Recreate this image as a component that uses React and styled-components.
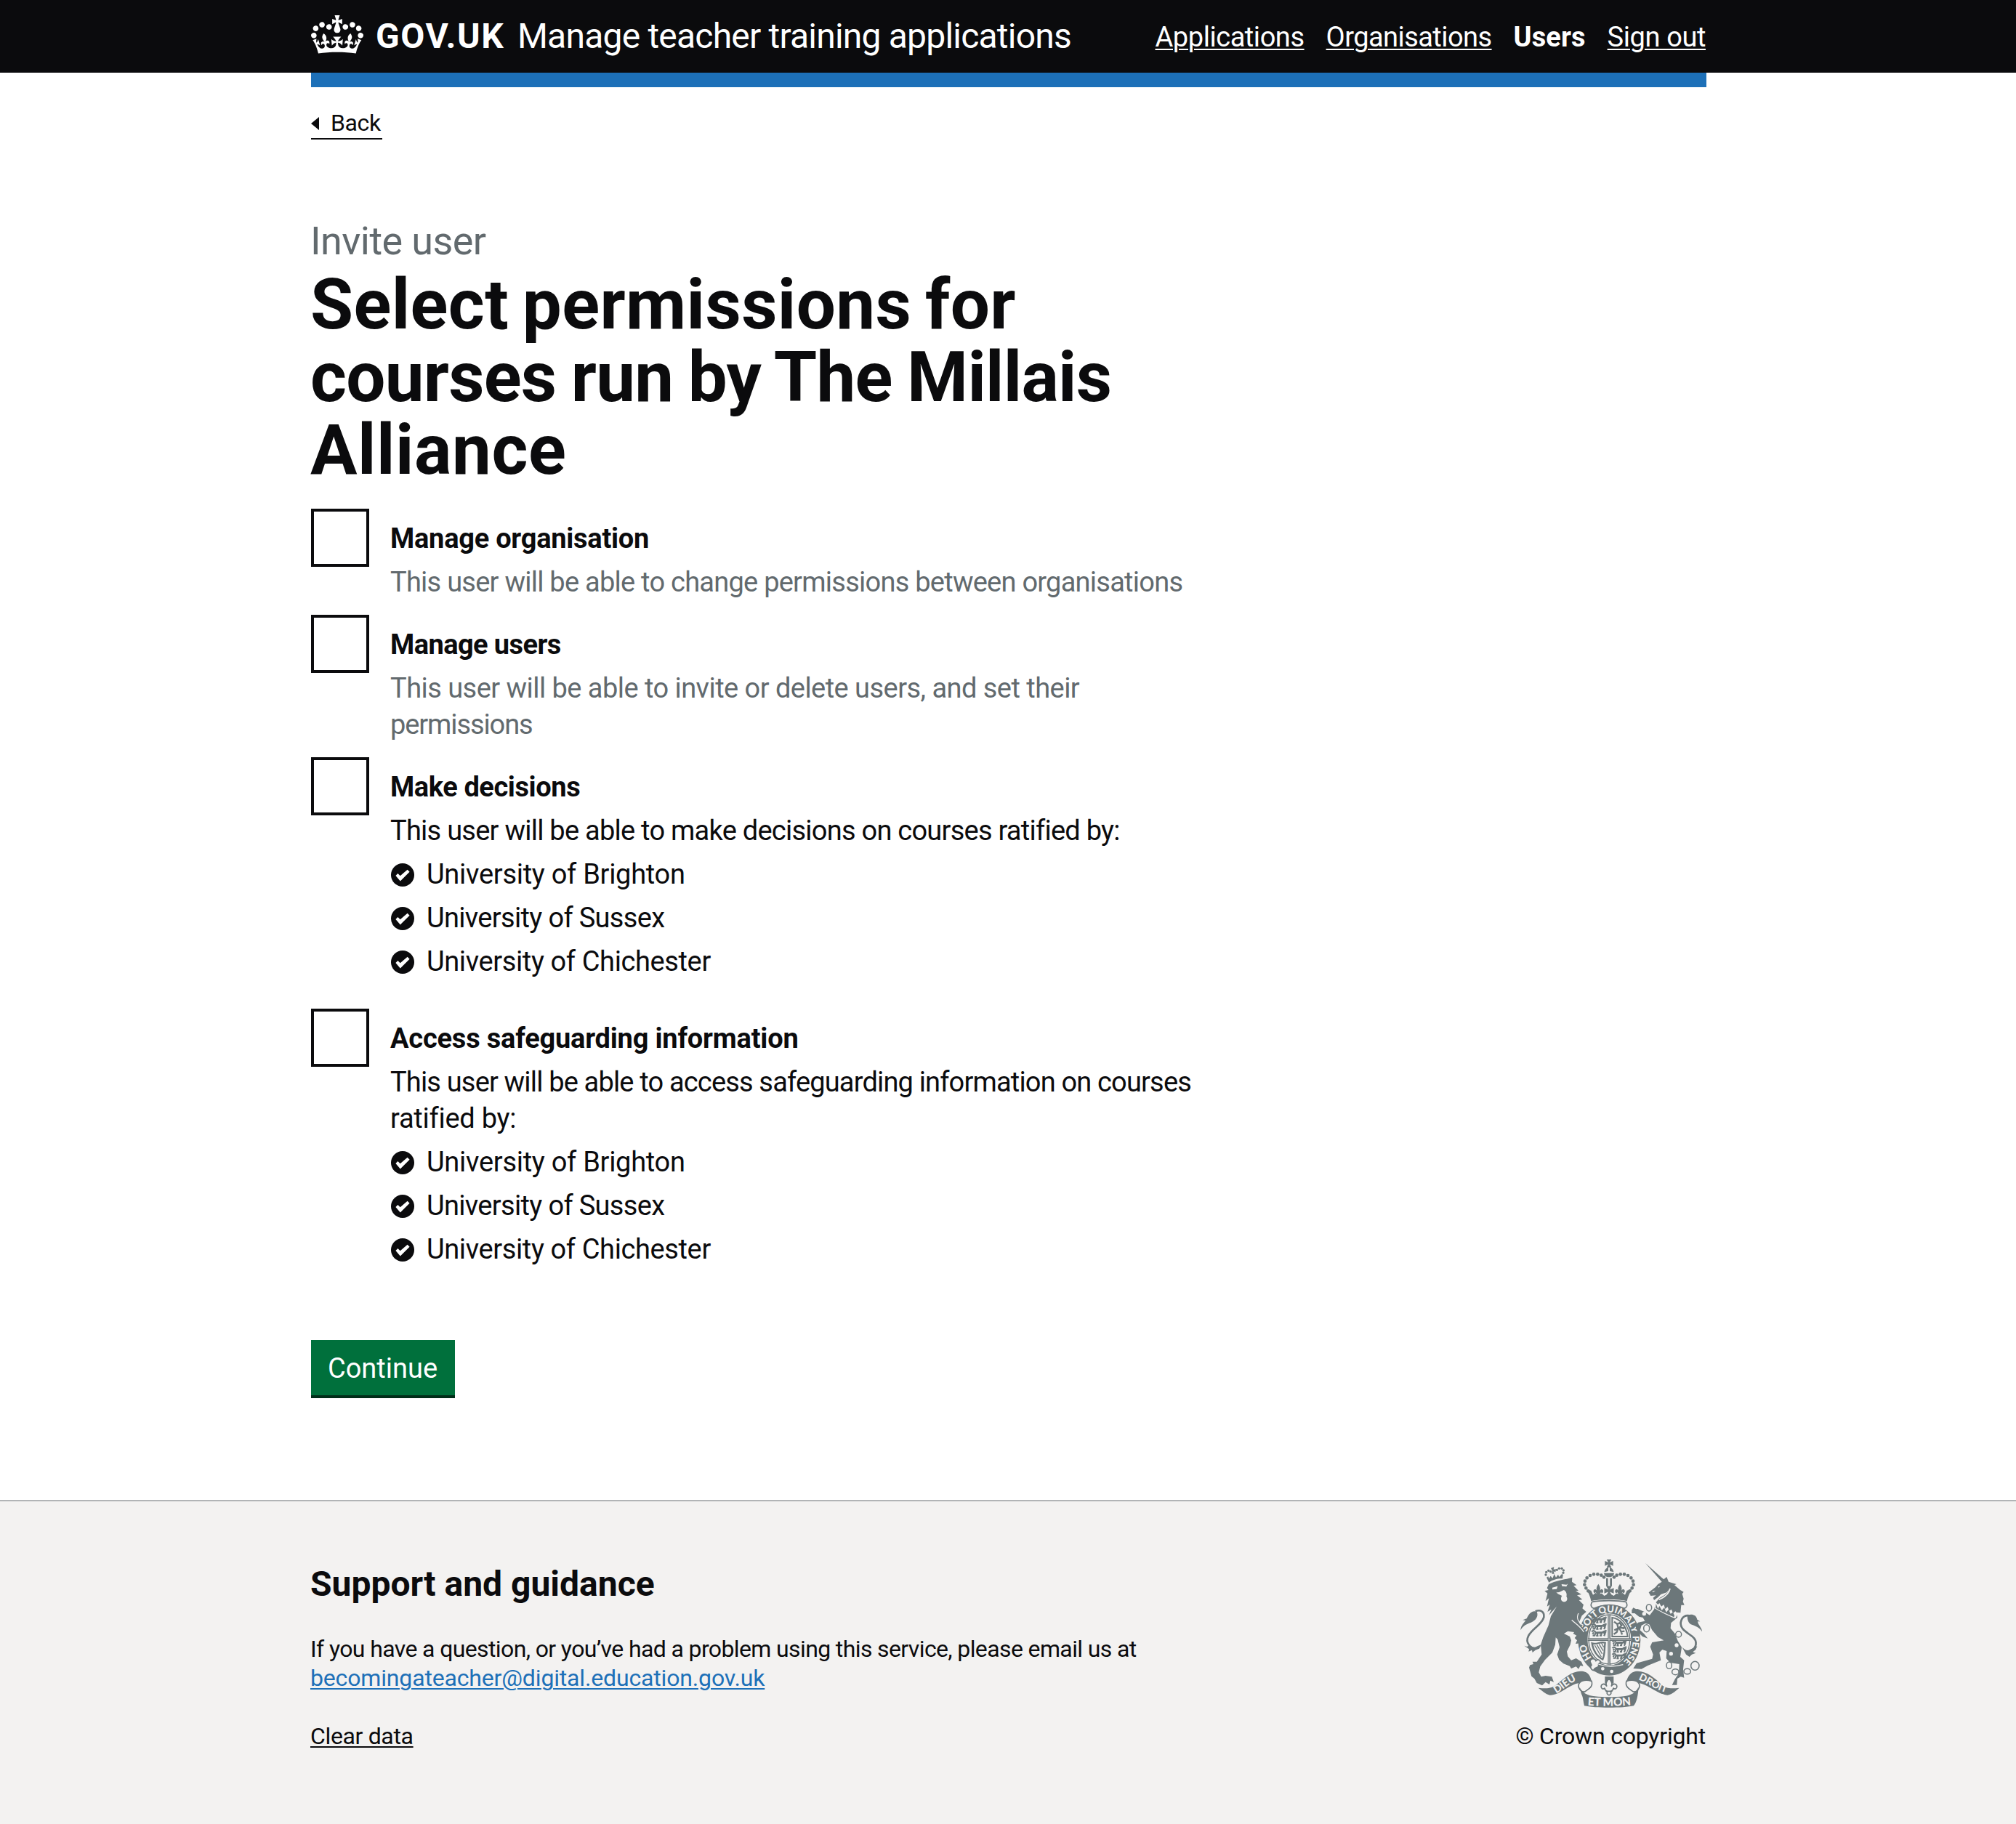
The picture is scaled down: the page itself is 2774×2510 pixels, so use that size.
import React from "react";
import styled, { createGlobalStyle } from "styled-components";

const INK = "#0b0b0d";
const SECONDARY = "#626a6e";
const LINK = "#1d70b8";
const ARMS = "#6c777a";
const PALE = "#f3f2f1";

const GlobalStyle = createGlobalStyle`
  * { box-sizing: border-box; }
  body {
    margin: 0;
    background: #fff;
    color: ${INK};
    font-family: Roboto, "Noto Sans", sans-serif;
    font-size: 38px;
    line-height: 50px;
  }
`;

const Page = styled.div`
  display: flex;
  flex-direction: column;
  min-height: 2510px;
`;

const Text = styled.span`
  letter-spacing: ${(p) => p.$track ?? 0}px;
  word-spacing: ${(p) => p.$gap ?? 0}px;
`;

/* ---------- header ---------- */

const Header = styled.header`
  background: ${INK};
  height: 100px;
`;

const Container = styled.div`
  width: 1920px;
  margin-left: 428px;
`;

const HeaderRow = styled(Container)`
  display: flex;
  align-items: flex-start;
  height: 100px;
  color: #fff;
`;

const CrownIcon = styled.svg`
  width: 72px;
  height: 53px;
  margin: 21px 17px 0 0;
  fill: #fff;
`;

const Logotype = styled.span`
  width: 195px;
  font-size: 48px;
  font-weight: 700;
  line-height: 100px;
  letter-spacing: 1.64px;
`;

const ServiceName = styled.span`
  font-size: 48px;
  line-height: 100px;
  letter-spacing: -0.79px;
`;

const Nav = styled.nav`
  display: flex;
  gap: 30px;
  margin-left: auto;
  padding: 1px 1px 0 0;
`;

const NavLink = styled.a`
  color: #fff;
  line-height: 100px;
  letter-spacing: ${(p) => p.$track}px;
  font-weight: ${(p) => (p.$current ? 700 : 400)};
  text-decoration: ${(p) => (p.$current ? "none" : "underline")};
  text-decoration-thickness: 2px;
  text-underline-offset: 3px;
`;

const PhaseBar = styled(Container)`
  height: 20px;
  background: ${LINK};
`;

/* ---------- main ---------- */

const Main = styled(Container)`
  display: flex;
  flex-direction: column;
  align-items: flex-start;
  height: 1944px;
  padding-top: 29px;
`;

const BackLink = styled.a`
  display: flex;
  align-items: flex-start;
  gap: 16px;
  width: 98px;
  height: 43px;
  border-bottom: 2px solid ${INK};
  font-size: 32px;
  line-height: 40px;
  letter-spacing: -0.4px;
`;

const BackArrow = styled.svg`
  width: 11px;
  height: 18px;
  margin-top: 12px;
  fill: ${INK};
`;

const Caption = styled.span`
  margin: 110px 0 0 -1px;
  color: ${SECONDARY};
  font-size: 54px;
  line-height: 60px;
  letter-spacing: -0.6px;
`;

const Heading = styled.h1`
  display: flex;
  flex-direction: column;
  margin: 7px 0 31px -1px;
  font-size: 96px;
  font-weight: 700;
  line-height: 100px;
`;

const Options = styled.div`
  display: flex;
  flex-direction: column;
`;

const Option = styled.div`
  display: grid;
  grid-template-columns: 80px 1fr;
  column-gap: 29px;
  margin-bottom: ${(p) => (p.$spacious ? 40 : 20)}px;
`;

const Checkbox = styled.span`
  width: 80px;
  height: 80px;
  border: 4px solid ${INK};
`;

const OptionBody = styled.div`
  display: flex;
  flex-direction: column;
  padding-top: 16px;
`;

const Label = styled.label`
  font-weight: 700;
  letter-spacing: ${(p) => p.$track}px;
`;

const Description = styled.div`
  display: flex;
  flex-direction: column;
  margin-top: 10px;
  color: ${(p) => (p.$muted ? SECONDARY : INK)};
`;

const OrgList = styled.ul`
  display: flex;
  flex-direction: column;
  gap: 10px;
  margin: 10px 0 0;
  padding: 0;
  list-style: none;
`;

const OrgItem = styled.li`
  display: flex;
  align-items: flex-start;
  gap: 17px;
`;

const TickIcon = styled.svg`
  width: 32px;
  height: 32px;
  margin: 10px 0 0 1px;
`;

const Button = styled.button`
  width: 198px;
  height: 76px;
  margin: 60px 0 0;
  padding: 2px 1px 0 0;
  border: 0;
  border-radius: 0;
  background: #00703c;
  box-shadow: 0 4px 0 #002d18;
  color: #fff;
  font: inherit;
  line-height: 74px;
`;

/* ---------- footer ---------- */

const Footer = styled.footer`
  flex: 1;
  border-top: 2px solid #b1b4b6;
  background: ${PALE};
`;

const FooterRow = styled.div`
  display: flex;
  justify-content: space-between;
  width: 1920px;
  margin-left: 427px;
  padding-top: 80px;
`;

const Support = styled.div`
  display: flex;
  flex-direction: column;
  align-items: flex-start;
  padding-top: 4px;
  font-size: 32px;
  line-height: 40px;
`;

const SupportTitle = styled.h2`
  margin: 0 0 39px;
  font-size: 48px;
  font-weight: 700;
  line-height: 60px;
`;

const FooterLink = styled.a`
  color: ${(p) => (p.$plain ? INK : LINK)};
  letter-spacing: ${(p) => p.$track}px;
  margin-bottom: 40px;
  text-decoration: underline;
  text-decoration-thickness: 2px;
  text-underline-offset: 3px;
`;

const Copyright = styled.div`
  display: flex;
  flex-direction: column;
  align-items: flex-end;
  font-size: 32px;
  line-height: 40px;
  letter-spacing: -0.2px;
`;

const ArmsIcon = styled.svg`
  width: 250px;
  height: 204px;
  margin: 0 5px 19px 0;
`;

const Motto = styled.text`
  fill: ${PALE};
  font-family: Lato, sans-serif;
  font-size: ${(p) => p.$size}px;
  font-weight: 900;
  text-anchor: middle;
`;

/* ---------- drawings ---------- */

function Crown() {
  return (
    <CrownIcon viewBox="0 0 132 97">
      <path d="M25 30.2c3.5 1.5 7.7-.2 9.1-3.7 1.5-3.6-.2-7.8-3.9-9.2-3.6-1.4-7.6.3-9.1 3.9-1.4 3.5.3 7.5 3.9 9zM9 39.5c3.6 1.5 7.8-.2 9.2-3.7 1.5-3.6-.2-7.8-3.9-9.1-3.6-1.5-7.6.2-9.1 3.8-1.4 3.5.3 7.5 3.8 9zM4.4 57.2c3.5 1.5 7.7-.2 9.1-3.8 1.5-3.6-.2-7.7-3.9-9.1-3.5-1.5-7.6.3-9.1 3.8-1.4 3.5.3 7.6 3.9 9.1zm38.3-21.4c3.5 1.5 7.7-.2 9.1-3.8 1.5-3.6-.2-7.7-3.9-9.1-3.6-1.5-7.6.3-9.1 3.8-1.3 3.6.4 7.7 3.9 9.1zm64.4-5.6c-3.6 1.5-7.8-.2-9.1-3.7-1.5-3.6.2-7.8 3.8-9.2 3.6-1.4 7.7.3 9.2 3.9 1.3 3.5-.4 7.5-3.9 9zm15.9 9.3c-3.6 1.5-7.7-.2-9.1-3.7-1.5-3.6.2-7.8 3.7-9.1 3.6-1.5 7.7.2 9.2 3.8 1.5 3.5-.3 7.5-3.8 9zm4.7 17.7c-3.6 1.5-7.8-.2-9.2-3.8-1.5-3.6.2-7.7 3.9-9.1 3.6-1.5 7.7.3 9.2 3.8 1.3 3.5-.4 7.6-3.9 9.1zM89.3 35.8c-3.6 1.5-7.8-.2-9.2-3.8-1.4-3.6.2-7.7 3.9-9.1 3.6-1.5 7.7.3 9.2 3.8 1.4 3.6-.3 7.7-3.9 9.1zM69.7 17.7l8.9 4.7V9.3l-8.9 2.8c-.2-.3-.5-.6-.9-.9L72.4 0H59.6l3.5 11.2c-.3.3-.6.5-.9.9l-8.8-2.8v13.1l8.8-4.7c.3.3.6.7.9.9l-5 15.4v.1c-.2.8-.4 1.6-.4 2.4 0 4.1 3.1 7.5 7 8.1h.2c.3 0 .7.1 1 .1.4 0 .7 0 1-.1h.2c4-.6 7.1-4.1 7.1-8.1 0-.8-.1-1.7-.4-2.4V34l-5.1-15.4c.4-.2.7-.6 1-.9zM66 92.8c16.9 0 32.8 1.1 47.1 3.2 4-16.9 8.9-26.7 14-33.5l-9.6-3.4c1 4.9 1.1 7.2 0 10.2-1.5-1.4-3-4.3-4.2-8.7L108.6 76c2.8-2 5-3.2 7.5-3.3-4.4 9.4-10 11.9-13.6 11.2-4.3-.8-6.3-4.6-5.6-7.9 1-4.7 5.7-5.9 8-.5 4.3-8.7-3-11.4-7.6-8.8 7.1-7.2 7.9-13.5 2.1-21.1-8 6.1-8.1 12.3-4.5 20.8-4.7-5.4-12.1-2.5-9.5 6.2 3.4-5.2 7.9-2 7.2 3.1-.6 4.3-6.4 7.8-13.5 7.2-10.3-.9-10.9-8-11.2-13.8 2.5-.5 7.1 1.8 11 7.3L80.2 60c-4.1 4.4-8 5.3-12.3 5.4 1.4-4.4 8-11.6 8-11.6H55.5s6.4 7.2 7.9 11.6c-4.2-.1-8-1-12.3-5.4l1.4 16.4c3.9-5.5 8.5-7.7 10.9-7.3-.3 5.8-.9 12.8-11.1 13.8-7.2.6-12.9-2.9-13.5-7.2-.7-5 3.8-8.3 7.1-3.1 2.7-8.7-4.6-11.6-9.4-6.2 3.7-8.5 3.6-14.7-4.6-20.8-5.8 7.6-5 13.9 2.2 21.1-4.7-2.6-11.9.1-7.7 8.8 2.3-5.5 7.1-4.2 8.1.5.7 3.3-1.3 7.1-5.7 7.9-3.5.7-9-1.8-13.5-11.2 2.5.1 4.7 1.3 7.5 3.3l-4.7-15.4c-1.2 4.4-2.7 7.2-4.3 8.7-1.1-3-.9-5.3 0-10.2l-9.5 3.4c5 6.9 9.9 16.7 14 33.5 14.8-2.1 30.8-3.2 47.7-3.2z" />
    </CrownIcon>
  );
}

function Tick() {
  return (
    <TickIcon viewBox="0 0 32 32">
      <circle cx="16" cy="16" r="16" fill={INK} />
      <path d="M6.4 17l3-3 3.3 3.3L22.6 8.8l3 3L12.8 24.4z" fill="#fff" />
    </TickIcon>
  );
}

const ARCH_BEADS = [
  [441, 151], [430, 143], [415, 139], [399, 139], [384, 144],
  [371, 154], [363, 167], [361, 182], [367, 196], [376, 208],
];

const CHAIN_RINGS = [
  [627, 277, 11, 14], [617, 362, 12, 15], [749, 387, 12, 12],
  [710, 515, 11, 14], [736, 542, 14, 12], [785, 540, 14, 11], [817, 517, 17, 18],
];

const FLEUR =
  "M0-24C6-14 10-8 6 3C12-6 22-2 20 8C19 15 12 15 11 9C9 15 6 17 4 19H-4C-6 17-9 15-11 9C-12 15-19 15-20 8C-22-2-12-6-6 3C-10-8-6-14 0-24Z";

const CROSS_PATTEE =
  "M-10-17H10L3-4L17-10V10L3 4L10 17H-10L-3 4L-17 10V-10L-3-4Z";

const LION_PASSANT =
  "M-30-8C-24-16-16-10-14-5L14-6C20-12 26-10 30-14M-22-6L-26 2M-14-5L-18 7H-26M-8-4L-6 8H-12M10-5L8 7H2M16-6L24 0L20 9M-14-3H14M22-9L28-4";

function Lions({ x, y, scale = 1 }) {
  return (
    <g transform={`translate(${x} ${y}) scale(${scale})`} fill="none" stroke={ARMS} strokeWidth="6.5">
      <path d={LION_PASSANT} transform="translate(0 -27)" />
      <path d={LION_PASSANT} />
      <path d={LION_PASSANT} transform="translate(0 27)" />
    </g>
  );
}

function RoyalArms() {
  return (
    <ArmsIcon viewBox="96 78 750 612" fill={ARMS}>
      {/* imperial crown */}
      <path d={CROSS_PATTEE} transform="translate(462 94)" />
      <path d="M443 129C444 119 452 112 459 111V126L443 130ZM481 129C480 119 472 112 465 111V126L481 130Z" />
      <path d="M441 134H483C482 144 474 151 462 151S442 144 441 134Z" />
      {ARCH_BEADS.map(([x, y]) => (
        <g key={`${x}-${y}`}>
          <circle cx={x} cy={y} r="7" />
          <circle cx={924 - x} cy={y} r="7" />
        </g>
      ))}
      <path d="M450 155H458V188H450ZM466 155H474V188H466Z" />
      <path d={CROSS_PATTEE} transform="translate(462 207) scale(1.15)" />
      <path d={FLEUR} transform="translate(418 203)" />
      <path d={FLEUR} transform="translate(507 203)" />
      <path d="M370 202L388 206L396 224L406 216L416 222L432 218L442 228L462 218L482 228L492 218L508 222L518 216L528 224L536 206L554 202C548 218 539 232 536 250C505 241 420 241 388 250C385 232 378 218 370 202Z" />
      <path d="M392 253C425 246 499 246 532 253C541 268 534 278 524 280C490 263 434 263 400 280C390 278 383 268 392 253Z" fill={PALE} stroke={ARMS} strokeWidth="5" />

      {/* garter */}
      <ellipse cx="463" cy="410" rx="129" ry="147" />
      <ellipse cx="463" cy="408" rx="90" ry="107" fill={PALE} />
      <ellipse cx="463" cy="408" rx="85" ry="102" fill="none" stroke={ARMS} strokeWidth="4" />
      <path id="garter" d="M463 522A97 113 0 0 1 463 296A97 113 0 0 1 463 522" fill="none" />
      <Motto $size={40}><textPath href="#garter" startOffset="17.5%">HO</textPath></Motto>
      <Motto $size={39}><textPath href="#garter" startOffset="36.5%">SOIT</textPath></Motto>
      <Motto $size={39}><textPath href="#garter" startOffset="49.2%">QUI</textPath></Motto>
      <Motto $size={39}><textPath href="#garter" startOffset="61%">MAL</textPath></Motto>
      <Motto $size={37}><textPath href="#garter" startOffset="69%">Y</textPath></Motto>
      <Motto $size={38}><textPath href="#garter" startOffset="81.5%">PENSE</textPath></Motto>

      {/* shield */}
      <path d="M457 305H468V518H457ZM374 403H552V414H374Z" />
      <path d="M462 305V518M374 408H552" fill="none" stroke={PALE} strokeWidth="2" />
      <Lions x="421" y="357" scale="1.02" />
      <Lions x="505" y="452" scale="0.98" />
      <path d="M475 318C505 322 534 350 539 396H475Z" fill="none" stroke={ARMS} strokeWidth="6" />
      <path d="M483 335L496 345L506 340L514 350L506 358L522 362L528 356M496 345L500 362L484 370M503 360L512 376L526 374M500 362L494 378L482 386M512 376L516 388" fill="none" stroke={ARMS} strokeWidth="7" />
      <path d="M392 424C410 432 428 414 446 422C442 445 446 468 436 490C414 480 396 454 392 424Z" fill="none" stroke={ARMS} strokeWidth="7" />
      <path d="M403 432L430 480M412 430L434 468M421 427L438 455M431 423L440 440" fill="none" stroke={ARMS} strokeWidth="4" />

      {/* garter buckle */}
      <path d="M384 500C386 484 404 486 408 496C414 488 428 492 426 504C420 506 416 512 420 520C410 526 398 524 400 536C388 536 382 520 390 514Z" fill={PALE} stroke={ARMS} strokeWidth="5" />
      <circle cx="436" cy="529" r="7" fill={PALE} />
      <circle cx="473" cy="540" r="7" fill={PALE} />
      <path d="M418 510C455 524 490 520 520 512" fill="none" stroke={PALE} strokeWidth="4" />

      {/* lion's crown */}
      <path d="M204 152L211 148L214 157L221 146L229 156L236 138L243 152L252 140L256 150L268 137L272 142L270 157C250 156 228 162 214 173Z" />
      <path d="M228 124L222 114L235 109L233 119L243 118L241 130L233 127L236 137L226 137Z" />
      {[[201, 141], [203, 130], [212, 124], [221, 128], [247, 121], [256, 115], [267, 115], [274, 123], [273, 133]].map(([x, y]) => (
        <circle key={x} cx={x} cy={y} r="5" />
      ))}

      {/* lion */}
      <path d="M213 180C240 166 275 160 288 158L310 152L309 170L328 184L316 187L336 207L324 208L348 222L330 226L352 243L338 246L357 265L352 280L368 294L350 310L338 338L358 366L372 392L370 412L366 436L356 428L340 434L342 424L324 426L330 412L320 402L328 392L314 384L318 378L292 374L276 384L300 396L306 412L302 430L288 458L292 478L306 494L326 486L348 500L356 518L344 516L336 530L326 520L306 528L300 518L274 508L256 492L248 470L258 440L250 408L242 400L240 430L228 462L198 492L178 520L172 544L182 562L200 558L226 562L234 584L220 578L216 594L200 584L186 598L164 588L154 570L142 560L132 524L136 514L150 510L146 500L164 500L184 470L180 430L190 400L212 350L222 312L246 272L232 288L214 308L224 284L208 294L218 264L206 272L214 238L200 250L208 218L196 208L212 204L206 196Z" />
      <path d="M228 194L250 188L246 200L228 202ZM266 180L286 182L292 178L286 190L268 188Z" fill={PALE} />
      <path d="M244 212C258 218 266 206 276 204C284 208 290 222 286 230C296 246 282 256 272 252C260 248 264 232 268 228C260 222 250 222 244 212Z" fill={PALE} />
      <path d="M308 328C326 344 346 356 358 378M336 300C324 322 340 340 356 350" fill="none" stroke={PALE} strokeWidth="4" />
      <path d="M172 442C138 452 114 422 130 392C146 362 186 346 193 316C196 292 178 284 158 292" fill="none" stroke={ARMS} strokeWidth="8" />
      <path d="M97 370C97 350 112 338 118 330L106 328L122 322C132 300 146 286 164 294C172 312 160 330 140 338C122 344 106 352 97 370Z" />
      <path d="M112 434L124 438L134 430L150 444L166 436L184 428L174 446L158 452L146 462L144 452L130 458L132 448Z" />

      {/* unicorn */}
      <path d="M612 93L688 160L700 150L708 170L740 180L732 184L756 204L770 212L764 220L770 240L767 252L773 266L760 266L757 298L742 296L744 318L718 340L716 362L734 384L746 414L762 440L756 480L772 494L768 530L772 566L758 562L744 570L742 596L722 596L734 572L750 548L752 510L714 504L698 486L700 456L682 450L670 462L676 494L622 516L596 530L562 528L576 506L640 488L644 470L632 438L640 420L688 412L664 398L640 370L628 346L612 342L596 350L590 370L606 384L622 404L600 396L580 376L570 352L582 338L610 332L602 318L586 314L568 300L556 300L556 284L580 282L608 294L630 308L648 284L656 254L672 236L690 226L704 214L712 200L700 214L676 222L664 234L648 246L644 236L656 226L634 228L626 214L654 192L664 180L680 170Z" />
      <path d="M640 210L654 206L644 214ZM664 190L672 188L668 194Z" fill={PALE} />
      <path d="M668 244C690 234 710 222 714 198" fill="none" stroke={PALE} strokeWidth="5" />
      <path d="M652 252L664 264L670 258L678 272L688 264L694 282L704 274L710 290L720 284L726 300L736 292L746 302L736 322C708 312 678 296 650 280Z" fill={PALE} />
      <path d="M656 260L664 282L670 270L680 288L690 276L698 296L708 284L716 302L726 296L732 310L730 316C706 306 680 294 654 278Z" />
      <path d="M560 280L572 286" fill="none" stroke={ARMS} strokeWidth="8" />
      {CHAIN_RINGS.map(([x, y, rx, ry]) => (
        <ellipse key={x} cx={x} cy={y} rx={rx} ry={ry} fill={PALE} stroke={ARMS} strokeWidth="4.5" />
      ))}
      <circle cx="607" cy="302" r="8" fill={PALE} />
      <circle cx="741" cy="432" r="8" fill={PALE} />
      <circle cx="718" cy="467" r="8" fill={PALE} />
      <path d="M796 456C826 446 828 414 806 396C780 376 756 366 758 338C762 314 780 304 800 312" fill="none" stroke={ARMS} strokeWidth="8" />
      <path d="M786 308C804 302 822 306 826 326L838 334L828 334C830 350 846 360 846 376C836 358 816 352 800 346C788 338 784 322 786 308Z" />
      <path d="M764 440C776 452 786 456 796 450L826 436L820 450L808 460L820 464L804 470L794 480L780 470Z" />

      {/* motto scroll */}
      <path d="M170 608C210 612 226 610 246 594C280 566 312 534 356 540C376 544 384 556 390 580C372 572 352 576 340 588C300 592 262 638 218 638C200 634 186 620 170 608Z" />
      <path d="M752 608C714 612 698 610 680 596C650 566 612 534 570 540C552 544 542 556 534 580C552 572 570 576 582 588C622 592 668 638 704 638C724 634 738 620 752 608Z" />
      <path d="M390 580C398 604 376 614 362 624C346 628 334 608 336 596C340 580 360 572 390 580ZM534 580C526 604 548 614 562 624C578 628 590 608 588 596C584 580 564 572 534 580Z" fill={PALE} stroke={ARMS} strokeWidth="5" />
      <path d="M340 604C350 628 372 640 404 643C440 647 488 647 522 643C552 640 574 628 584 604C582 640 576 668 564 682C520 692 404 692 360 682C354 656 356 650 348 634Z" />
      <path id="dieu" d="M240 633C276 617 306 577 350 572" fill="none" />
      <path id="droit" d="M566 570C610 576 646 620 720 632" fill="none" />
      <path id="mon" d="M362 679C420 685 504 685 564 677" fill="none" />
      <Motto $size={42}><textPath href="#dieu" startOffset="43%">DIEU</textPath></Motto>
      <Motto $size={41}><textPath href="#droit" startOffset="48%">DROIT</textPath></Motto>
      <Motto $size={46}><textPath href="#mon" startOffset="50%">ET MON</textPath></Motto>

      {/* fleur-de-lis badge */}
      <path d="M445 561H481V590H445Z" />
      <path d="M462 570C474 582 476 594 471 602C480 586 498 592 494 606C490 616 482 612 480 608C480 618 472 620 470 622V632C466 640 458 640 454 632V622C452 620 444 618 444 608C442 612 434 616 430 606C426 592 444 586 453 602C448 594 450 582 462 570Z" fill={PALE} stroke={ARMS} strokeWidth="5" />
      <path d="M448 622H476" stroke={ARMS} strokeWidth="5" />
    </ArmsIcon>
  );
}

/* ---------- content ---------- */

const NAV = [
  { label: "Applications", track: -0.45 },
  { label: "Organisations", track: -0.55 },
  { label: "Users", track: 0.1, current: true },
  { label: "Sign out", track: -0.4 },
];

const ORGS = [
  { name: "University of Brighton", track: -0.28 },
  { name: "University of Sussex", track: -0.67 },
  { name: "University of Chichester", track: -0.38 },
];

const OPTIONS = [
  {
    label: "Manage organisation",
    track: -0.25,
    muted: true,
    lines: [["This user will be able to change permissions between organisations", -0.75]],
  },
  {
    label: "Manage users",
    track: -0.58,
    muted: true,
    lines: [
      ["This user will be able to invite or delete users, and set their", -0.54],
      ["permissions", -1.1],
    ],
  },
  {
    label: "Make decisions",
    track: -0.42,
    spacious: true,
    lines: [["This user will be able to make decisions on courses ratified by:", -0.75]],
    orgs: ORGS,
  },
  {
    label: "Access safeguarding information",
    track: -0.2,
    spacious: true,
    lines: [
      ["This user will be able to access safeguarding information on courses", -0.83],
      ["ratified by:", -0.25],
    ],
    orgs: ORGS,
  },
];

export default function App() {
  return (
    <Page>
      <GlobalStyle />
      <Header>
        <HeaderRow>
          <Crown />
          <Logotype>GOV.UK</Logotype>
          <ServiceName>Manage teacher training applications</ServiceName>
          <Nav>
            {NAV.map((item) => (
              <NavLink key={item.label} $track={item.track} $current={item.current}>
                {item.label}
              </NavLink>
            ))}
          </Nav>
        </HeaderRow>
      </Header>
      <PhaseBar />

      <Main as="main">
        <BackLink>
          <BackArrow viewBox="0 0 11 18">
            <path d="M0 9L11 0V18Z" />
          </BackArrow>
          Back
        </BackLink>
        <Caption>Invite user</Caption>
        <Heading>
          <Text $track={0.4} $gap={-5.5}>Select permissions for</Text>
          <Text $track={-0.75} $gap={-2.7}>courses run by The Millais</Text>
          <Text $track={0.6}>Alliance</Text>
        </Heading>
        <Options>
          {OPTIONS.map((option) => (
            <Option key={option.label} $spacious={option.spacious}>
              <Checkbox />
              <OptionBody>
                <Label $track={option.track}>{option.label}</Label>
                <Description $muted={option.muted}>
                  {option.lines.map(([line, track]) => (
                    <Text key={line} $track={track}>{line}</Text>
                  ))}
                </Description>
                {option.orgs && (
                  <OrgList>
                    {option.orgs.map((org) => (
                      <OrgItem key={org.name}>
                        <Tick />
                        <Text $track={org.track}>{org.name}</Text>
                      </OrgItem>
                    ))}
                  </OrgList>
                )}
              </OptionBody>
            </Option>
          ))}
        </Options>
        <Button>Continue</Button>
      </Main>

      <Footer>
        <FooterRow>
          <Support>
            <SupportTitle>Support and guidance</SupportTitle>
            <Text $track={-0.62}>
              If you have a question, or you’ve had a problem using this service, please email us at
            </Text>
            <FooterLink $track={-0.16}>becomingateacher@digital.education.gov.uk</FooterLink>
            <FooterLink $plain $track={-0.35}>Clear data</FooterLink>
          </Support>
          <Copyright>
            <RoyalArms />
            © Crown copyright
          </Copyright>
        </FooterRow>
      </Footer>
    </Page>
  );
}
